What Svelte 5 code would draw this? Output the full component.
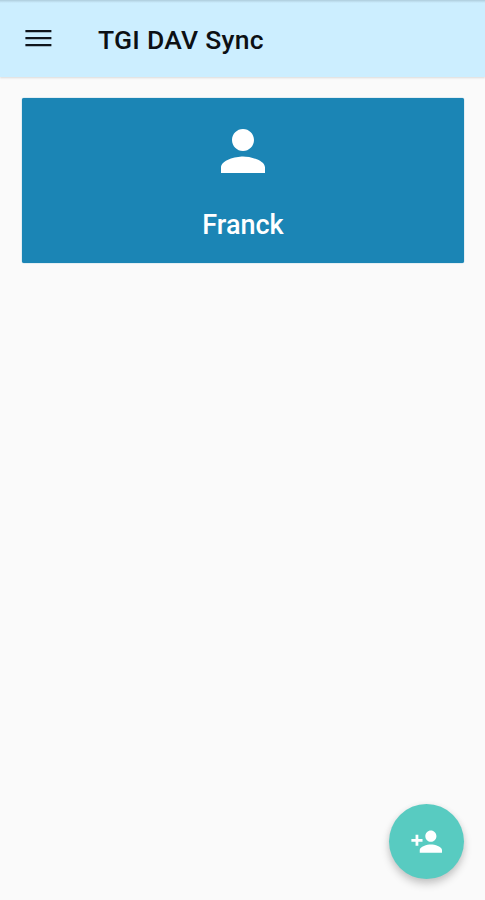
<script>
  const title = 'TGI DAV Sync';
  const accounts = [{ name: 'Franck' }];
</script>

<div class="screen">
  <header class="bar">
    <button class="menu" aria-label="Menu">
      <svg width="27" height="18" viewBox="0 0 27 18">
        <path d="M.4 0h26v2.3H.4zM.4 7h26v2.3H.4zM.4 14h26v2.3H.4z" fill="#10151c" />
      </svg>
    </button>
    <h1>{title}</h1>
  </header>

  <main>
    {#each accounts as account}
      <section class="card">
        <svg class="person" viewBox="0 0 24 24">
          <path d="M12 12c2.21 0 4-1.79 4-4s-1.79-4-4-4-4 1.79-4 4 1.79 4 4 4zm0 2c-2.67 0-8 1.34-8 4v2h16v-2c0-2.66-5.33-4-8-4z" fill="#fff" />
        </svg>
        <span class="name">{account.name}</span>
      </section>
    {/each}
  </main>

  <button class="fab" aria-label="Add account">
    <svg viewBox="0 0 24 24">
      <path d="M15 12c2.21 0 4-1.79 4-4s-1.79-4-4-4-4 1.79-4 4 1.79 4 4 4zm-9-2V7H4v3H1v2h3v3h2v-3h3v-2H6zm9 4c-2.67 0-8 1.34-8 4v2h16v-2c0-2.66-5.33-4-8-4z" fill="#fff" />
    </svg>
  </button>
</div>

<style>
  .screen {
    position: relative;
    box-sizing: border-box;
    height: 900px;
    overflow: hidden;
    background: #fafafa;
    font-family: Roboto, 'Liberation Sans', sans-serif;
  }
  .bar {
    box-sizing: border-box;
    display: flex;
    align-items: center;
    height: 77px;
    padding: 2px 0 0 25px;
    background: linear-gradient(#adcbdb 0, #b9d9e9 1px, #cceeff 3px);
    box-shadow: 0 1px 2px rgba(0, 0, 0, 0.13);
  }
  button {
    display: block;
    margin: 0;
    padding: 0;
    border: 0;
    background: none;
  }
  .menu {
    width: 73px;
    height: 18px;
    margin-bottom: 1px;
  }
  .menu svg {
    display: block;
  }
  h1 {
    margin: 0;
    color: #0c1014;
    font-size: 26.5px;
    font-weight: 500;
    line-height: 30px;
    letter-spacing: 0.25px;
    white-space: nowrap;
  }
  main {
    padding: 21px 21px 0 22px;
  }
  .card {
    box-sizing: border-box;
    display: flex;
    flex-direction: column;
    align-items: center;
    height: 165px;
    padding-top: 20px;
    border-radius: 2px;
    background: #1b85b5;
    box-shadow: 0 0 1px #1b85b5;
  }
  .person {
    width: 66px;
    height: 66px;
  }
  .name {
    margin-top: 25px;
    color: #fff;
    font-size: 27px;
    font-weight: 500;
    line-height: 32px;
  }
  .fab {
    position: absolute;
    top: 803.5px;
    left: 388.8px;
    display: flex;
    align-items: center;
    justify-content: center;
    width: 75.5px;
    height: 75.5px;
    border-radius: 50%;
    background: #58cbc1;
    box-shadow: 0 5px 9px rgba(0, 0, 0, 0.2), 0 1px 6px rgba(0, 0, 0, 0.06);
  }
  .fab svg {
    width: 33.4px;
    height: 33.4px;
  }
</style>
